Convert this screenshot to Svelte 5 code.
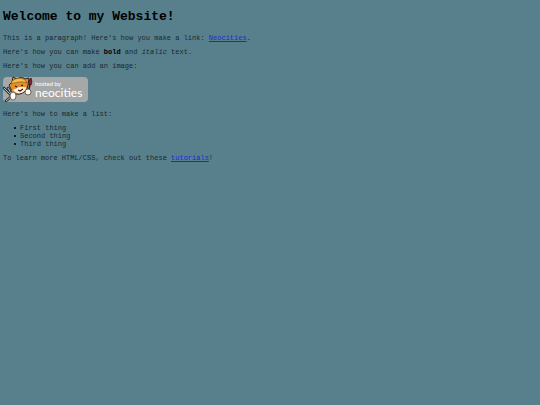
<script lang="ts">
	const things = ['First thing', 'Second thing', 'Third thing'];
</script>

<main>
	<h1>Welcome to my Website!</h1>

	<p>This is a paragraph! Here's how you make a link: <a href="#neocities">Neocities</a>.</p>

	<p>Here's how you can make <strong>bold</strong> and <em>italic</em> text.</p>

	<p>Here's how you can add an image:</p>

	<svg class="badge" viewBox="0 0 85 26" role="img" aria-label="Hosted by Neocities">
		<rect x="0" y="1" width="85" height="25" rx="4" fill="#a6a7a7" />
		<!-- tools -->
		<path d="M1 12l7 7M5 12l3 5M9 20l-6 5" fill="none" stroke="#2c383e" stroke-width="2.6" stroke-linecap="round" />
		<path d="M1 12l7 7M5 12l3 5M9 20l-6 5" fill="none" stroke="#b4c2c8" stroke-width="1" />
		<path d="M25 18l2-10" stroke="#3a2422" stroke-width="1.6" />
		<path d="M26 9c-1-3 0-5 2-7 1 2 1 5 0 7z" fill="#8c2028" stroke="#301418" stroke-width=".8" />
		<!-- cat -->
		<path d="M8 13L6 9l3-3 1-5 4 2c3-2 6-2 8 0l4-1-1 7-1 4-3 3c-4 3-9 3-13 0z" fill="#e58d2e" stroke="#33241a" stroke-width="1" />
		<path d="M8 8c1-7 14-8 16-1-5-2-10-1-16 1z" fill="#f5bf42" stroke="#6a451c" stroke-width=".6" />
		<path d="M10 14c3-1 5-3 7-3 2-1 4 1 6 0 0 7-10 8-13 3z" fill="#fff0e0" />
		<path d="M12 10l2 1M20 9l-2 1M15 14l2 1 3-2" fill="none" stroke="#33180f" stroke-width="1.3" />
		<ellipse cx="10" cy="20" rx="3" ry="4" fill="#fff" stroke="#54412f" stroke-width=".8" />
		<ellipse cx="25" cy="16" rx="3" ry="3" fill="#fff" stroke="#54412f" stroke-width=".8" />
		<text class="host" x="32" y="10">hosted by</text>
		<text class="brand" x="32" y="21">neocities</text>
	</svg>

	<p>Here's how to make a list:</p>

	<ul>
		{#each things as thing}
			<li>{thing}</li>
		{/each}
	</ul>

	<p>To learn more HTML/CSS, check out these <a href="#tutorials">tutorials</a>!</p>
</main>

<style>
	:global(body) {
		background: #57808c;
	}

	main {
		padding: 8px 3px;
		color: #1a292e;
		font-family: 'Liberation Mono', 'Courier New', monospace;
		font-size: 7px;
		line-height: 8px;
	}

	h1 {
		margin: 0 0 8px;
		color: #000;
		font-size: 13px;
		line-height: 18px;
	}

	p,
	ul {
		margin: 0 0 6px;
	}

	ul {
		padding-left: 11px;
		list-style: none;
	}

	li {
		display: flex;
		align-items: center;
		gap: 4px;
	}

	li::before {
		content: '';
		width: 2px;
		height: 2px;
		border-radius: 50%;
		background: #000;
	}

	strong {
		color: #000;
	}

	a {
		color: #1a2ad8;
	}

	.badge {
		display: block;
		width: 85px;
		height: 26px;
		margin-bottom: 8px;
	}

	.badge text {
		fill: #fff;
		font-family: Lato, 'Open Sans', sans-serif;
	}

	.host {
		font-size: 6px;
	}

	.brand {
		font-size: 12px;
	}
</style>
